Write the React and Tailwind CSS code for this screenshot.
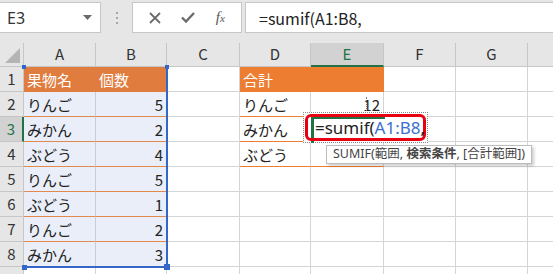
import React from 'react';

// column widths (px) incl. right grid line
const cols = [
    { id: 'A', w: 72 },
    { id: 'B', w: 71 },
    { id: 'C', w: 73 },
    { id: 'D', w: 71 },
    { id: 'E', w: 73 },
    { id: 'F', w: 72 },
    { id: 'G', w: 72 },
    { id: 'H', w: 72 },
];

const fruits = [
    ['りんご', 5],
    ['みかん', 2],
    ['ぶどう', 4],
    ['りんご', 5],
    ['ぶどう', 1],
    ['りんご', 2],
    ['みかん', 3],
];

const summary = ['りんご', 'みかん', 'ぶどう'];

const cellFont = { fontFamily: '"Noto Sans CJK JP", "Noto Sans", sans-serif' };
const latinFont = { fontFamily: '"Noto Sans", "Noto Sans CJK JP", sans-serif' };

// --- one grid cell ---
const Cell = ({ w, className = '', children }) => (
    <div
        style={{ width: w }}
        className={`h-[25px] shrink-0 border-b border-r flex items-center px-[3px] text-[15px] leading-none ${className}`}
    >
        {children}
    </div>
);

const getCell = (row, col) => {
    const w = col.w;
    // A1:B8 table
    if (col.id === 'A' || col.id === 'B') {
        if (row === 1) {
            return (
                <Cell w={w} className="bg-[#df7c3e] border-b-[#df7c3e] border-r-[#df7c3e] text-white">
                    {col.id === 'A' ? '果物名' : '個数'}
                </Cell>
            );
        }
        if (row <= 8) {
            const [name, qty] = fruits[row - 2];
            return (
                <Cell w={w} className={`bg-[#e9eef8] border-b-[#e2894e] border-r-[#c9ccd2] text-[#222] ${col.id === 'B' ? 'justify-end' : ''}`}>
                    {col.id === 'A' ? name : qty}
                </Cell>
            );
        }
    }
    // D1:E4 table
    if (col.id === 'D' || col.id === 'E') {
        if (row === 1) {
            return (
                <Cell w={w} className="bg-[#ed7d31] border-b-[#ed7d31] border-r-[#ed7d31] text-white">
                    {col.id === 'D' ? '合計' : ''}
                </Cell>
            );
        }
        if (row <= 4) {
            return (
                <Cell w={w} className={`bg-white border-b-[#ed7d31] border-r-[#d4d4d4] text-[#222] ${col.id === 'E' ? 'justify-end' : ''}`}>
                    {col.id === 'D' ? summary[row - 2] : row === 2 ? '12' : ''}
                </Cell>
            );
        }
    }
    return <Cell w={w} className="bg-white border-[#d4d4d4]" />;
};

const FormulaBar = () => (
    <div className="h-[43px] bg-[#e6e6e6] pt-[2px] flex items-start">
        {/* name box */}
        <div className="w-[101px] h-[31px] bg-white border border-l-0 border-[#c6c6c6] flex items-center justify-between pl-[7px] pr-[8px]">
            <span className="text-[16px] text-[#333]" style={{ fontFamily: '"Noto Sans", sans-serif' }}>E3</span>
            <svg width="9" height="5" viewBox="0 0 9 5"><path d="M0 0h9L4.5 5z" fill="#6a6a6a" /></svg>
        </div>
        {/* grip */}
        <div className="w-[31px] h-[31px] flex flex-col items-center justify-center gap-[3px]">
            <span className="w-[2px] h-[2px] bg-[#a8a8a8]" />
            <span className="w-[2px] h-[2px] bg-[#a8a8a8]" />
            <span className="w-[2px] h-[2px] bg-[#a8a8a8]" />
        </div>
        {/* cancel / enter / fx */}
        <div className="w-[110px] h-[31px] bg-white border border-[#c6c6c6] flex items-center justify-around px-[6px]">
            <svg width="12" height="12" viewBox="0 0 12 12">
                <path d="M1 1L11 11M11 1L1 11" stroke="#6b6b6b" strokeWidth="1.8" />
            </svg>
            <svg width="14" height="11" viewBox="0 0 14 11">
                <path d="M1 5.5L5 9.5L13 1" stroke="#6b6b6b" strokeWidth="2.4" fill="none" />
            </svg>
            <span className="text-[15px] italic text-[#555]" style={{ fontFamily: '"Liberation Serif", serif' }}>
                f<span className="text-[11px]">x</span>
            </span>
        </div>
        {/* formula input */}
        <div className="ml-[3px] flex-1 h-[31px] bg-white border border-r-0 border-[#c6c6c6] flex items-center pl-[13px]">
            <span className="text-[16px] text-[#222]" style={cellFont}>=sumif(A1:B8,</span>
        </div>
    </div>
);

const App = () => {
    const rows = [1, 2, 3, 4, 5, 6, 7, 8, 9];

    return (
        <div className="w-[553px] h-[274px] overflow-hidden relative bg-white" style={cellFont}>
            <FormulaBar />

            {/* column headers */}
            <div className="flex h-[24px] bg-[#e6e6e6]">
                <div className="w-[24px] shrink-0 border-r border-b border-[#c6c6c6] flex items-end justify-end p-[3px]">
                    <svg width="15" height="15" viewBox="0 0 15 15"><path d="M15 0V15H0z" fill="#b4b4b4" /></svg>
                </div>
                {cols.map((c) => (
                    <div
                        key={c.id}
                        style={{ width: c.w }}
                        className={`shrink-0 flex items-center justify-center text-[15px] border-r border-[#c6c6c6] ${c.id === 'E' ? 'bg-[#d2d2d2] border-b-2 border-b-[#217346] text-[#217346]' : 'border-b border-b-[#c6c6c6] text-[#333]'}`}
                    >
                        {c.id}
                    </div>
                ))}
            </div>

            {/* rows */}
            {rows.map((r) => (
                <div key={r} className="flex">
                    <div className={`w-[24px] h-[25px] shrink-0 flex items-center justify-center text-[15px] text-[#333] border-b border-[#c6c6c6] ${r === 3 ? 'bg-[#d2d2d2] border-r-2 border-r-[#217346] text-[#217346]' : 'bg-[#e6e6e6] border-r'}`}>
                        {r}
                    </div>
                    {cols.map((c) => (
                        <React.Fragment key={c.id}>{getCell(r, c)}</React.Fragment>
                    ))}
                </div>
            ))}

            {/* range highlight A1:B8 */}
            <div className="absolute left-[24px] top-[67px] w-[144px] h-[201px] border-r-2 border-b-2 border-[#3468c8] pointer-events-none" />
            <span className="absolute left-[22px] top-[65px] w-[4px] h-[4px] bg-[#3468c8]" />
            <span className="absolute left-[165px] top-[65px] w-[4px] h-[4px] bg-[#3468c8]" />
            <span className="absolute left-[22px] top-[265px] w-[5px] h-[5px] bg-[#3468c8]" />
            <span className="absolute left-[164px] top-[264px] w-[6px] h-[6px] bg-[#3468c8]" />

            {/* dotted line beside 12 */}
            <div className="absolute left-[366px] top-[97px] h-[16px] border-l border-dotted border-[#777]" />

            {/* editing cell E3 */}
            <div className="absolute left-[303px] top-[112px] w-[125px] h-[31px] border border-dotted border-[#888] bg-white">
                <div className="absolute left-[8px] top-[4px] w-[73px] h-[2px] bg-[#217346]" />
                <div className="absolute left-[7px] top-[4px] w-[3px] h-[26px] bg-[#217346]" />
                <div className="absolute inset-[1px] rounded-[6px] border-[3px] border-[#e60012]" />
                <div className="absolute left-[11px] top-0 h-full flex items-center text-[17px] text-[#222]" style={latinFont}>
                    =sumif(<span className="text-[#3b6fd1]">A1:B8</span>,
                </div>
            </div>

            {/* function tooltip */}
            <div className="absolute left-[326px] top-[145px] w-[206px] h-[19px] bg-white border border-[#bdbdbd] shadow-[2px_2px_3px_rgba(0,0,0,0.2)] flex items-center pl-[6px] text-[12.5px] text-[#444] whitespace-nowrap" style={latinFont}>
                SUMIF(範囲,&nbsp;<span className="font-semibold">検索条件</span>,&nbsp;[合計範囲])
            </div>
        </div>
    );
};

export default App;
